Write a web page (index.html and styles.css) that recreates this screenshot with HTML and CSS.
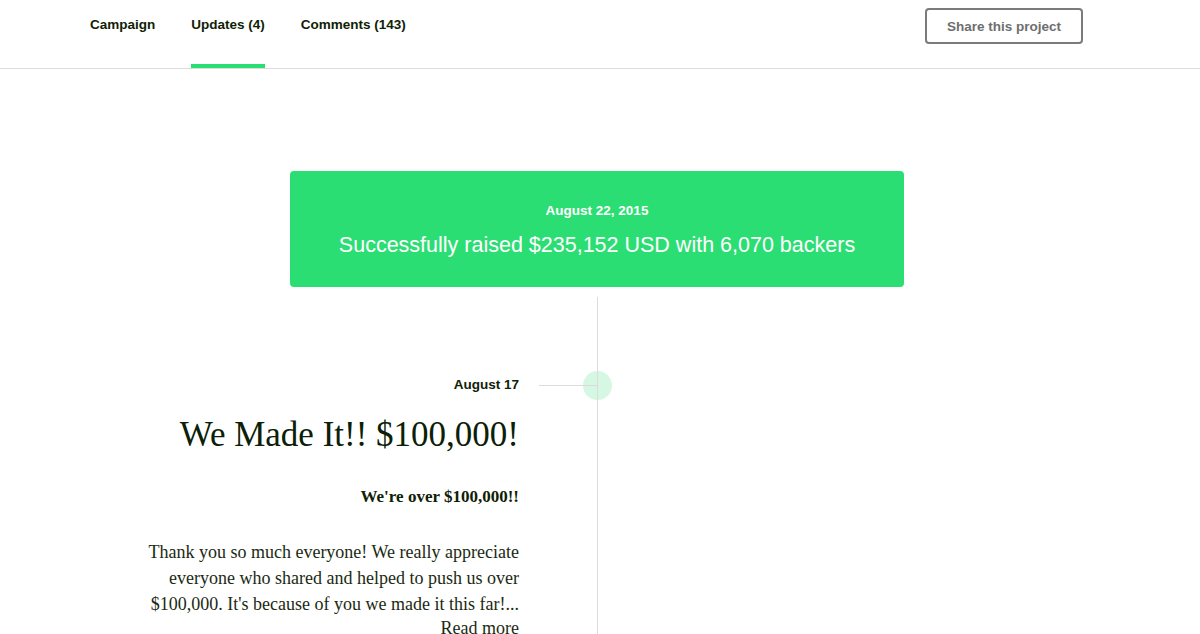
FILE: index.html
```html
<!DOCTYPE html>
<html>
<head>
<meta charset="utf-8">
<link rel="stylesheet" href="styles.css">
</head>
<body>
<header class="topbar">
  <nav class="tabs">
    <a class="tab">Campaign</a>
    <a class="tab active">Updates (4)</a>
    <a class="tab">Comments (143)</a>
  </nav>
  <button class="share">Share this project</button>
</header>
<main class="main">
  <section class="banner">
    <div class="banner-date">August 22, 2015</div>
    <div class="banner-text">Successfully raised $235,152 USD with 6,070 backers</div>
  </section>
  <section class="timeline">
    <div class="col-left">
      <article class="entry">
        <div class="entry-date">August 17<span class="connector"></span><span class="dot"></span></div>
        <h2 class="entry-title">We Made It!! $100,000!</h2>
        <p class="entry-sub">We're over $100,000!!</p>
        <p class="entry-body">Thank you so much everyone! We really appreciate<br>everyone who shared and helped to push us over<br>$100,000. It's because of you we made it this far!...</p>
        <a class="read-more">Read more</a>
      </article>
    </div>
    <div class="rail"></div>
  </section>
</main>
</body>
</html>
```
FILE: styles.css
```css
* { box-sizing: border-box; }
html, body { margin: 0; padding: 0; background: #fff; }
body { font-family: "Liberation Sans", Arial, sans-serif; color: #0f2105; overflow: hidden; height: 634px; }

.topbar {
  height: 69px;
  border-bottom: 1px solid #dcdcdc;
  display: flex;
  justify-content: space-between;
  align-items: flex-start;
  padding: 0 117px 0 90px;
}
.tabs { display: flex; gap: 36px; height: 68px; }
.tab {
  font-size: 13.5px;
  font-weight: bold;
  color: #0f2105;
  padding-top: 17px;
  height: 68px;
  border-bottom: 4px solid transparent;
  line-height: 16px;
}
.tab.active { border-bottom-color: #2bde73; }

.share {
  margin-top: 8px;
  width: 158px;
  height: 36px;
  border: 2px solid #7b7b7b;
  border-radius: 4px;
  background: #fff;
  font-family: "Liberation Sans", Arial, sans-serif;
  font-size: 13.5px;
  font-weight: bold;
  color: #6e6e6e;
  padding: 0;
}

.main { padding-top: 102px; }

.banner {
  margin-left: 290px;
  width: 614px;
  height: 116px;
  background: #2bde73;
  border-radius: 4px;
  color: #fff;
  text-align: center;
  padding-top: 32px;
}
.banner-date { font-size: 13.5px; font-weight: bold; line-height: 16px; }
.banner-text { font-size: 21.5px; line-height: 26px; margin-top: 13px; }

.timeline {
  display: flex;
  margin-top: 10px;
  height: 337px;
}
.col-left { width: 597px; padding-right: 78px; }
.rail { width: 1px; background: #dcdcdc; position: relative; z-index: 3; }

.entry { text-align: right; font-family: "Liberation Serif", "Times New Roman", serif; }
.entry-date {
  position: relative;
  font-family: "Liberation Sans", Arial, sans-serif;
  font-size: 13.5px;
  font-weight: bold;
  line-height: 16px;
  margin-top: 80px;
}
.connector {
  position: absolute;
  left: calc(100% + 20px);
  top: 8px;
  width: 58px;
  height: 1px;
  background: #dcdcdc;
  z-index: 2;
}
.dot {
  position: absolute;
  left: calc(100% + 64px);
  top: -6px;
  width: 29px;
  height: 29px;
  border-radius: 50%;
  background: #d5f7e3;
  z-index: 1;
}
.entry-title {
  margin: 22px 0 0;
  font-size: 35px;
  font-weight: normal;
  line-height: 40px;
  color: #0b2007;
}
.entry-sub {
  margin: 29px 0 0;
  font-size: 17px;
  font-weight: bold;
  line-height: 26px;
}
.entry-body {
  margin: 29px 0 0;
  font-size: 18px;
  line-height: 26px;
  color: #1b2a12;
  white-space: nowrap;
}
.read-more {
  display: block;
  font-size: 18px;
  line-height: 22px;
  color: #1b2a12;
}
```
